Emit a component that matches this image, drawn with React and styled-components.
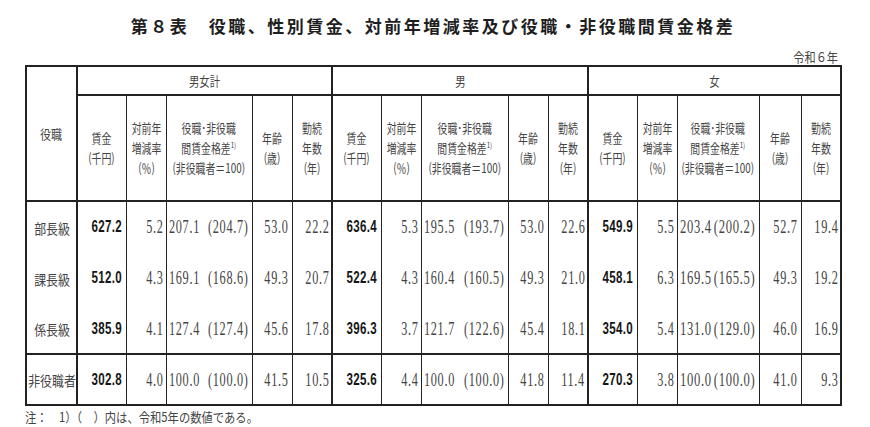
import React from "react";
import styled, { createGlobalStyle } from "styled-components";

const GlobalStyle = createGlobalStyle`
  body {
    margin: 0;
    background: #fff;
    color: #333;
    font-family: "Noto Sans CJK JP", "Noto Sans", sans-serif;
  }
`;

const Page = styled.div`
  width: 816px;
  padding: 16px 0 0 25px;
`;

const Title = styled.h1`
  margin: 0;
  font-size: 17px;
  line-height: 20px;
  font-weight: 700;
  letter-spacing: 2.5px;
  text-align: center;
  color: #1e1e1e;
`;

const Year = styled.div`
  display: flex;
  justify-content: flex-end;
  margin-top: 13px;
  padding-right: 3px;
  height: 16px;
  line-height: 16px;
  font-size: 13px;
  color: #444;
`;

// 縦長に見せるための横方向圧縮
const Squeeze = styled.span`
  display: inline-block;
  flex-shrink: 0;
  white-space: nowrap;
  transform: scaleX(${(p) => p.$x || 0.78});
  transform-origin: ${(p) => p.$origin || "center"};
`;

const Table = styled.table`
  width: 816px;
  table-layout: fixed;
  border-collapse: collapse;
  border: 2px solid #222;
`;

const Col = styled.col`
  width: ${(p) => p.$w}px;
`;

const Cell = styled.td`
  padding: 0;
  height: ${(p) => p.$h}px;
  border-left: ${(p) => (p.$thick ? 2 : 1)}px solid #222;
  border-top: ${(p) => (p.$sep ? "2px solid #222" : "none")};
  border-bottom: ${(p) => (p.$under ? "2px solid #222" : "none")};
  vertical-align: middle;
  font-weight: 400;
`;

const Inner = styled.div`
  display: flex;
  align-items: center;
  justify-content: ${(p) => p.$justify || "center"};
  padding: ${(p) => p.$pad || "0"};
`;

// 格差セルの左右の値
const Slot = styled.div`
  flex: 1;
  min-width: 0;
  display: flex;
  justify-content: ${(p) => (p.$end ? "flex-end" : "flex-start")};
`;

const HeadText = styled(Squeeze)`
  font-size: 13px;
  line-height: 20px;
  text-align: center;
  color: #444;

  sup {
    font-size: 8px;
    line-height: 0;
    vertical-align: 5px;
  }
`;

const GroupText = styled(Squeeze)`
  font-size: 13px;
  color: #444;
`;

const Label = styled(Squeeze)`
  font-size: 14px;
  padding-top: 1px;
  color: #444;
`;

const Num = styled(Squeeze)`
  font-family: ${(p) =>
    p.$bold
      ? '"Liberation Sans", Arial, sans-serif'
      : '"Liberation Serif", "Times New Roman", serif'};
  font-weight: ${(p) => (p.$bold ? 700 : 400)};
  font-size: ${(p) => (p.$bold ? 17 : 18)}px;
  line-height: 20px;
  letter-spacing: ${(p) => (p.$bold ? 0.5 : 1)}px;
  color: ${(p) => (p.$bold ? "#151515" : "#444")};
`;

const Note = styled.div`
  margin-top: 3px;
  height: 16px;
  line-height: 16px;
  font-size: 13px;
  color: #444;
`;

const widths = [51, 49, 40, 86, 40, 40, 49, 40, 87, 40, 40, 49, 40, 82, 42, 40];

const groups = ["男女計", "男", "女"];

const heads = [
  ["賃金", "(千円)"],
  ["対前年", "増減率", "(％)"],
  ["役職･非役職", "gap", "(非役職者＝100)"],
  ["年齢", "(歳)"],
  ["勤続", "年数", "(年)"],
];

const rows = [
  ["部長級", 50, [
    ["627.2", "5.2", "207.1", "(204.7)", "53.0", "22.2"],
    ["636.4", "5.3", "195.5", "(193.7)", "53.0", "22.6"],
    ["549.9", "5.5", "203.4", "(200.2)", "52.7", "19.4"],
  ]],
  ["課長級", 52, [
    ["512.0", "4.3", "169.1", "(168.6)", "49.3", "20.7"],
    ["522.4", "4.3", "160.4", "(160.5)", "49.3", "21.0"],
    ["458.1", "6.3", "169.5", "(165.5)", "49.3", "19.2"],
  ]],
  ["係長級", 49, [
    ["385.9", "4.1", "127.4", "(127.4)", "45.6", "17.8"],
    ["396.3", "3.7", "121.7", "(122.6)", "45.4", "18.1"],
    ["354.0", "5.4", "131.0", "(129.0)", "46.0", "16.9"],
  ]],
  ["非役職者", 49, [
    ["302.8", "4.0", "100.0", "(100.0)", "41.5", "10.5"],
    ["325.6", "4.4", "100.0", "(100.0)", "41.8", "11.4"],
    ["270.3", "3.8", "100.0", "(100.0)", "41.0", "9.3"],
  ]],
];

const HeadLines = ({ lines }) => (
  <HeadText $x={0.76}>
    {lines.map((line, i) => (
      <React.Fragment key={i}>
        {i > 0 && <br />}
        {line === "gap" ? (
          <>
            間賃金格差<sup>1)</sup>
          </>
        ) : (
          line
        )}
      </React.Fragment>
    ))}
  </HeadText>
);

const GroupCells = ({ values, sep, gi }) => {
  const [wage, rate, gap, prev, age, years] = values;
  const gapScale = gi === 2 ? 0.7 : 0.68;
  return (
    <>
      <Cell $thick $sep={sep}>
        <Inner $justify="flex-end" $pad="0 3px 0 0">
          <Num $bold $x={0.68} $origin="right">{wage}</Num>
        </Inner>
      </Cell>
      <Cell $sep={sep}>
        <Inner $justify="flex-end" $pad="0 2px 0 0">
          <Num $x={0.68} $origin="right">{rate}</Num>
        </Inner>
      </Cell>
      <Cell $sep={sep}>
        <Inner $pad="0 3px 0 2px">
          <Slot>
            <Num $x={gapScale} $origin="left">{gap}</Num>
          </Slot>
          <Slot $end>
            <Num $x={gapScale} $origin="right">{prev}</Num>
          </Slot>
        </Inner>
      </Cell>
      <Cell $sep={sep}>
        <Inner $justify="flex-end" $pad="0 3px 0 0">
          <Num $x={0.68} $origin="right">{age}</Num>
        </Inner>
      </Cell>
      <Cell $sep={sep}>
        <Inner $justify="flex-end" $pad="0 2px 0 0">
          <Num $x={0.68} $origin="right">{years}</Num>
        </Inner>
      </Cell>
    </>
  );
};

const App = () => {
  return (
    <>
      <GlobalStyle />
      <Page>
        <Title>第８表　役職、性別賃金、対前年増減率及び役職・非役職間賃金格差</Title>
        <Year>
          <Squeeze $x={0.86} $origin="right">令和６年</Squeeze>
        </Year>
        <Table>
          <colgroup>
            {widths.map((w, i) => (
              <Col key={i} $w={w} />
            ))}
          </colgroup>
          <thead>
            <tr>
              <Cell as="th" rowSpan={2} $under>
                <Inner>
                  <HeadText $x={0.85}>役職</HeadText>
                </Inner>
              </Cell>
              {groups.map((g) => (
                <Cell as="th" key={g} colSpan={5} $thick $under $h={27}>
                  <Inner>
                    <GroupText $x={0.8}>{g}</GroupText>
                  </Inner>
                </Cell>
              ))}
            </tr>
            <tr>
              {groups.map((g) =>
                heads.map((lines, i) => (
                  <Cell as="th" key={g + i} $thick={i === 0} $under $h={104}>
                    <Inner>
                      <HeadLines lines={lines} />
                    </Inner>
                  </Cell>
                ))
              )}
            </tr>
          </thead>
          <tbody>
            {rows.map(([label, h, groupVals], ri) => {
              const sep = ri === rows.length - 1;
              return (
                <tr key={label}>
                  <Cell $h={h} $sep={sep}>
                    <Inner>
                      <Label $x={0.85}>{label}</Label>
                    </Inner>
                  </Cell>
                  {groupVals.map((vals, gi) => (
                    <GroupCells key={gi} gi={gi} values={vals} sep={sep} />
                  ))}
                </tr>
              );
            })}
          </tbody>
        </Table>
        <Note>
          <Squeeze $x={0.87} $origin="left">
            注：　1）（　）内は、令和5年の数値である。
          </Squeeze>
        </Note>
      </Page>
    </>
  );
};

export default App;
